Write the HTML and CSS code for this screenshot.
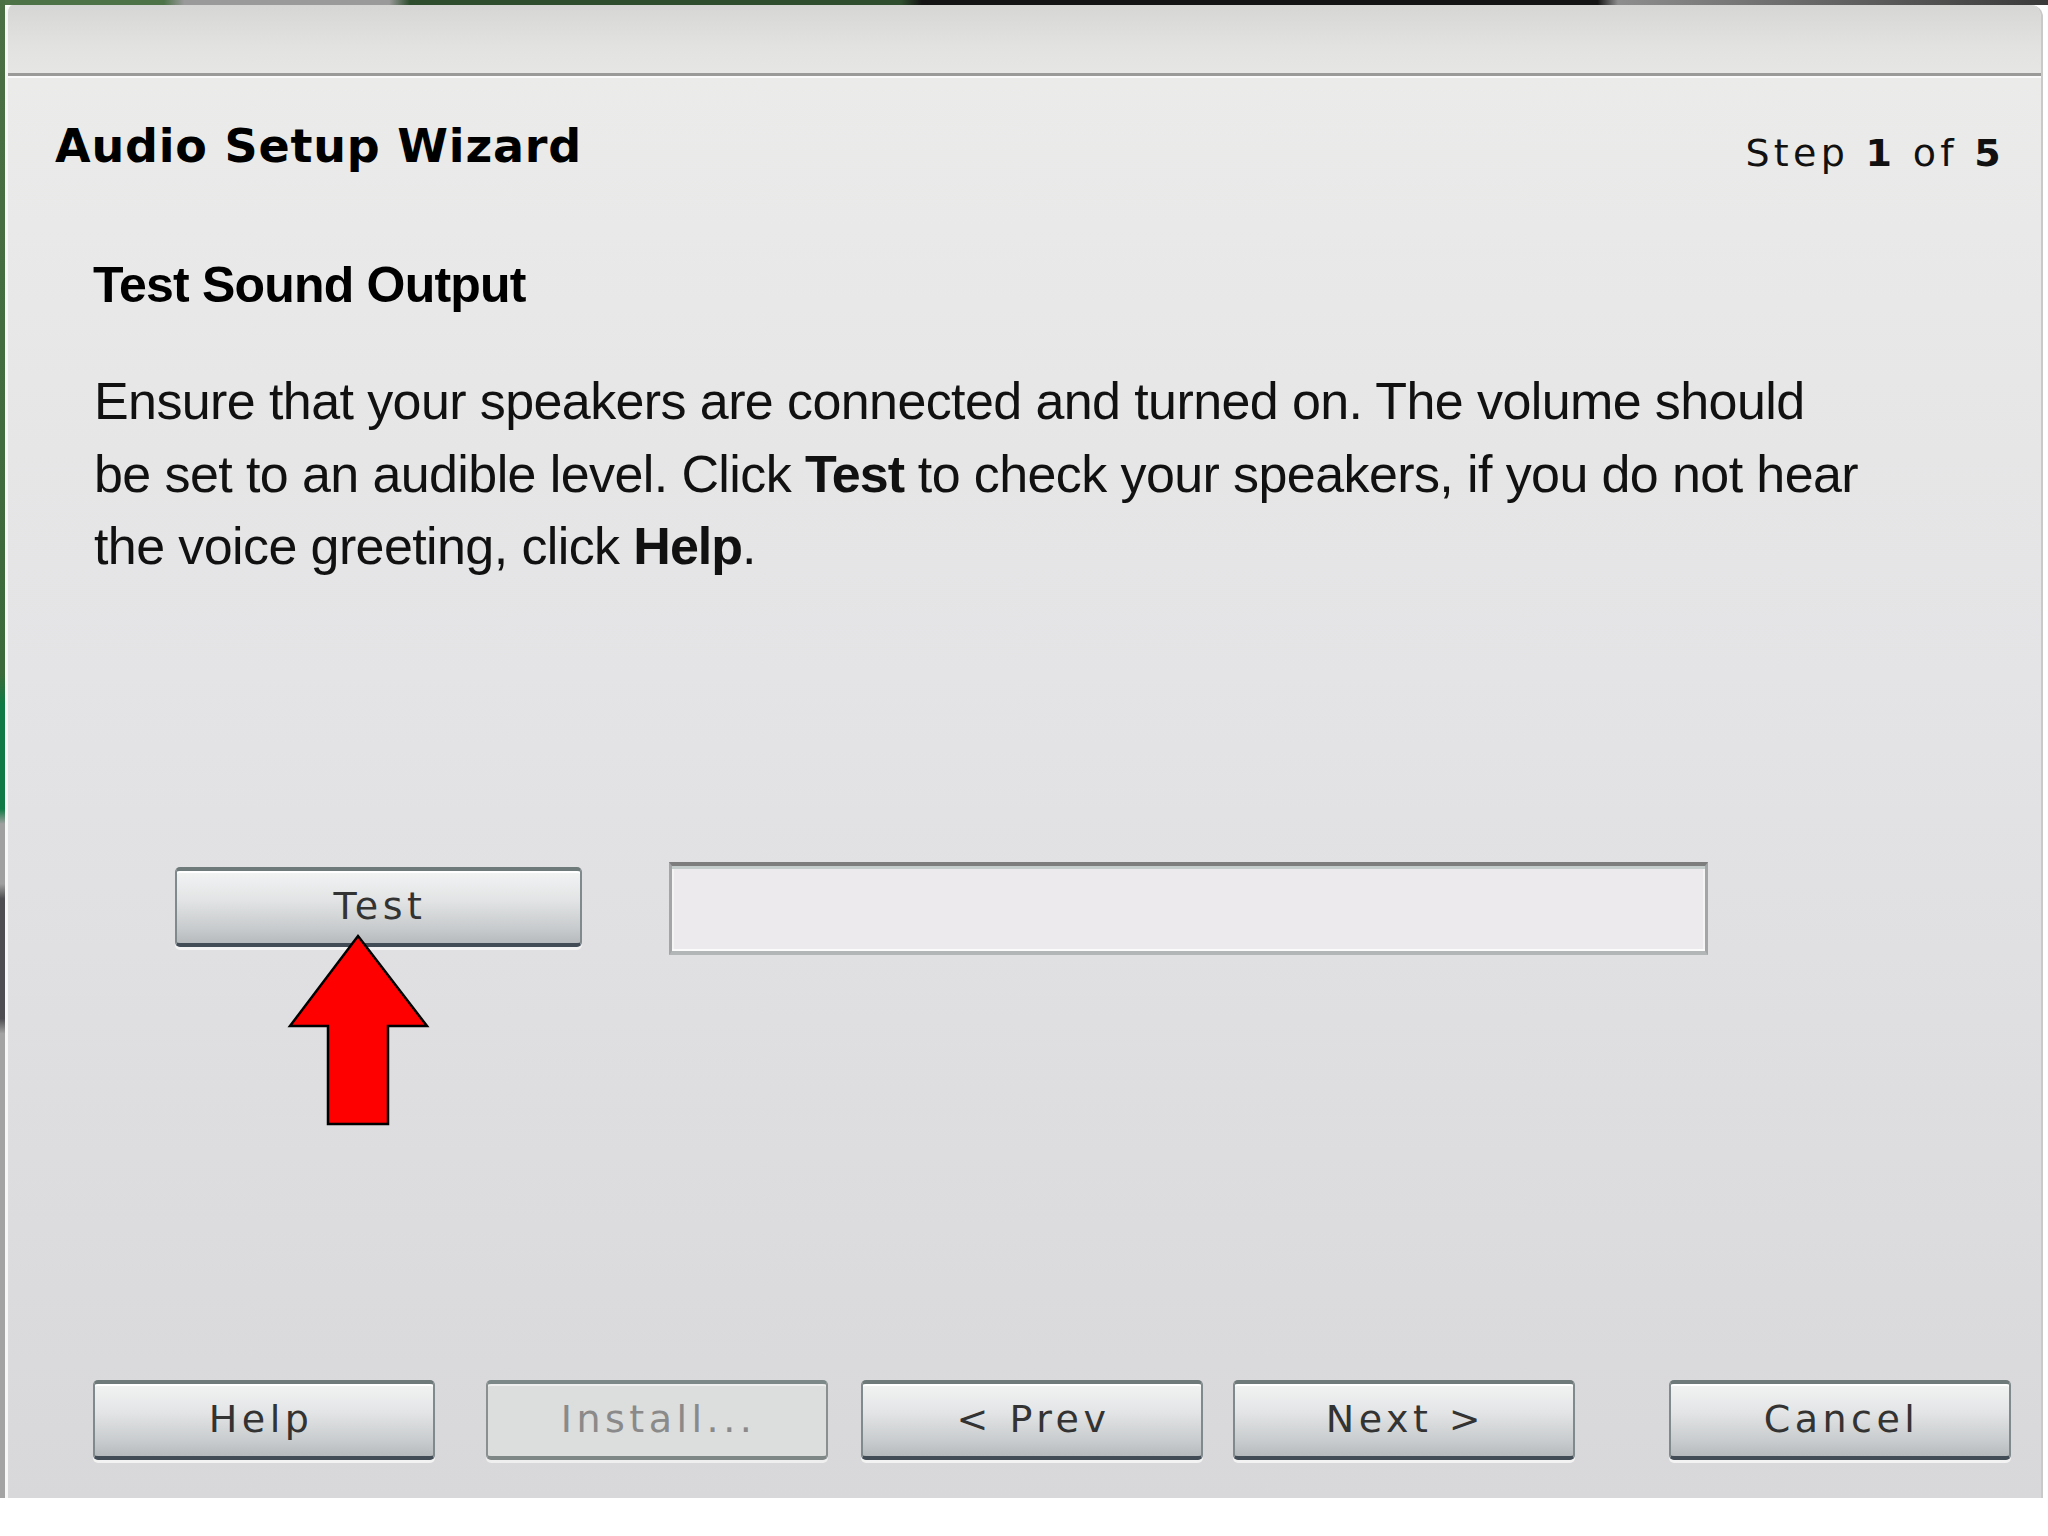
FILE: index.html
```html
<!DOCTYPE html>
<html>
<head>
<meta charset="utf-8">
<title>Audio Setup Wizard</title>
<link rel="stylesheet" href="styles.css">
</head>
<body>
<div class="backdrop">
  <div class="dialog">
    <div class="titlebar"></div>
    <div class="content">
      <div class="header">
        <div class="wizard-title">Audio Setup Wizard</div>
        <div class="step">Step <b>1</b> of <b>5</b></div>
      </div>
      <h1 class="heading">Test Sound Output</h1>
      <p class="desc">Ensure that your speakers are connected and turned on. The volume should<br>be set to an audible level. Click <b>Test</b> to check your speakers, if you do not hear<br>the voice greeting, click <b>Help</b>.</p>
      <div class="test-row">
        <div class="test-wrap">
          <button class="btn btn-test">Test</button>
          <svg class="arrow" width="142" height="193" viewBox="0 0 142 193">
            <polygon points="70,2 139,92 100,92 100,190 40,190 40,92 2,92" fill="#ff0000" stroke="#000" stroke-width="2.5" stroke-linejoin="miter"/>
          </svg>
        </div>
        <div class="level-box"></div>
      </div>
      <div class="footer">
        <button class="btn btn-help">Help</button>
        <button class="btn btn-install" disabled>Install...</button>
        <button class="btn btn-prev">&lt; Prev</button>
        <button class="btn btn-next">Next &gt;</button>
        <button class="btn btn-cancel">Cancel</button>
      </div>
    </div>
  </div>
</div>
</body>
</html>
```
FILE: styles.css
```css
html, body {
  margin: 0;
  padding: 0;
  background: #ffffff;
}

.backdrop {
  height: 1498px;
  box-sizing: border-box;
  padding: 5px 5px 0 5px;
  background:
    linear-gradient(to bottom, #4b7044 0, #3c6a3a 45%, #0f7a45 47%, #0f7a45 54%, #a0a0a0 55%, #a0a0a0 59%, #4e4e52 60%, #4e4e52 68%, #a3a3a3 69%, #a3a3a3 100%) left top / 5px 100% no-repeat,
    linear-gradient(to right, #4d7347 0, #4d7347 8%, #9a9a9a 9%, #9a9a9a 19%, #2e4e2e 20%, #2e4e2e 44%, #141414 45%, #141414 78%, #8d8d8d 79%, #3a3a3a 100%) left top / 100% 5px no-repeat,
    #ffffff;
}

.dialog {
  height: 100%;
  display: flex;
  flex-direction: column;
  border-radius: 8px 12px 0 0;
  overflow: hidden;
  background: linear-gradient(to bottom, #ececeb 0%, #e4e3e5 45%, #d8d7d9 100%);
  border-left: 3px solid #f7f7f7;
  border-right: 2px solid #c9c9c9;
}

.titlebar {
  height: 68px;
  flex: none;
  background: linear-gradient(to bottom, #d6d6d4 0%, #e2e2e0 60%, #e6e6e4 100%);
  border-bottom: 3px solid #9a9a98;
}

.content {
  flex: 1;
  display: flex;
  flex-direction: column;
  border-top: 2px solid #fafafa;
  padding: 38px 40px 38px 0;
  font-family: "Liberation Sans", Arial, sans-serif;
  color: #000;
}

.header {
  display: flex;
  justify-content: space-between;
  align-items: flex-start;
  padding-left: 47px;
}

.wizard-title {
  font-family: "DejaVu Sans", Verdana, sans-serif;
  font-weight: bold;
  font-size: 46px;
  line-height: 60px;
  letter-spacing: 0.8px;
  color: #000;
}

.step {
  font-family: "DejaVu Sans", Verdana, sans-serif;
  font-size: 38px;
  line-height: 60px;
  letter-spacing: 4.3px;
  margin-top: 7px;
  margin-right: -4px;
  color: #111;
}

.heading {
  margin: 72px 0 0 85px;
  font-size: 50px;
  line-height: 60px;
  font-weight: bold;
  letter-spacing: -0.8px;
  color: #000;
}

.desc {
  margin: 50px 0 0 86px;
  white-space: nowrap;
  font-size: 52px;
  line-height: 72.5px;
  letter-spacing: -0.6px;
  color: #111;
}

.desc b {
  font-weight: bold;
  letter-spacing: -1px;
}

.test-row {
  display: flex;
  align-items: flex-start;
  margin-top: 279px;
  padding-left: 167px;
  gap: 87px;
}

.test-wrap {
  position: relative;
  margin-top: 5px;
}

.arrow {
  position: absolute;
  left: 113px;
  top: 67px;
  overflow: visible;
}

.level-box {
  flex: none;
  width: 1039px;
  height: 93px;
  box-sizing: border-box;
  background: #eceaec;
  border-top: 4px solid #7d7d7d;
  border-left: 3px solid #a2a6a7;
  border-right: 3px solid #a2a6a7;
  border-bottom: 4px solid #b3b6b6;
  box-shadow: inset 0 3px 0 #c5cccc, inset 0 -2px 0 #fbfbfb, inset 2px 0 0 #f4f4f4, inset -2px 0 0 #f4f4f4;
}

.btn {
  flex: none;
  display: flex;
  align-items: center;
  justify-content: center;
  box-sizing: border-box;
  width: 342px;
  height: 80px;
  padding: 0 0 2px 0;
  font-family: "DejaVu Sans", Verdana, sans-serif;
  font-size: 38px;
  letter-spacing: 4.5px;
  text-indent: 3px;
  color: #333;
  background: linear-gradient(to bottom, #f2f4f4 0%, #e2e4e5 40%, #c8cbcd 80%, #b6babc 100%);
  border: 2px solid #808a8c;
  border-top: 4px solid #6e7979;
  border-bottom: 4px solid #414c56;
  border-radius: 5px;
  box-shadow: inset 0 2px 0 #ffffff, 0 3px 0 #f3f3f3;
}

.btn-help {
  text-indent: -6px;
}

.btn-test {
  width: 407px;
}

.btn-install {
  color: #8a8a8a;
  background: #dcdddd;
  border-color: #8a9090;
  border-top-color: #7c8787;
  border-bottom-color: #7f8686;
  box-shadow: inset 0 2px 0 #eeeeee, 0 3px 0 #efefef;
}

.footer {
  display: flex;
  margin-top: auto;
  padding-left: 85px;
}

.btn-install { margin-left: 51px; }
.btn-prev { margin-left: 33px; }
.btn-next { margin-left: 30px; }
.btn-cancel { margin-left: 94px; }
```
